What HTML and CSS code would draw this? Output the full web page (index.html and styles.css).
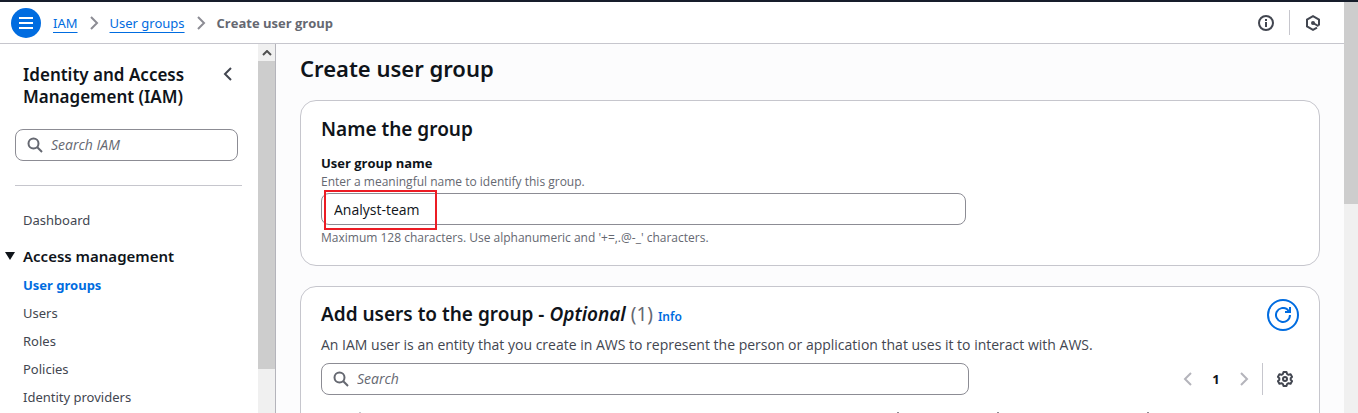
FILE: index.html
```html
<!DOCTYPE html>
<html lang="en">
<head>
<meta charset="utf-8">
<meta name="viewport" content="width=device-width, initial-scale=1">
<title>Create user group | IAM</title>
<link rel="stylesheet" href="styles.css">
</head>
<body>
<div class="app">
  <div class="page">
    <header class="topbar">
      <button class="menu-btn" aria-label="Toggle navigation">
        <svg width="16" height="16" viewBox="0 0 16 16"><path d="M1 3h14M1 8h14M1 13h14" /></svg>
      </button>
      <nav class="crumbs" aria-label="Breadcrumbs">
        <a href="#">IAM</a>
        <svg class="sep" width="16" height="16" viewBox="0 0 16 16"><path d="M5 2l6 6-6 6" /></svg>
        <a href="#">User groups</a>
        <svg class="sep" width="16" height="16" viewBox="0 0 16 16"><path d="M5 2l6 6-6 6" /></svg>
        <span class="current">Create user group</span>
      </nav>
      <div class="tools">
        <button class="icon-btn" aria-label="Info">
          <svg width="16" height="16" viewBox="0 0 16 16"><circle cx="8" cy="8" r="7" /><path d="M8 4v2M8 7v5" /></svg>
        </button>
        <span class="rule"></span>
        <button class="icon-btn" aria-label="Resources">
          <svg width="16" height="16" viewBox="0 0 16 16"><path d="M14 10.500V4.500L8 1.200 2 4.500v7L8 14.800l4-2.200" /><path d="M8 8l5.500 3.200" /><circle cx="8" cy="8" r="1" /></svg>
        </button>
      </div>
    </header>
    <div class="body">
      <aside class="sidebar">
        <div class="side-content">
          <div class="side-head">
            <h2>Identity and Access Management (IAM)</h2>
            <button class="icon-btn" aria-label="Close navigation">
              <svg width="16" height="16" viewBox="0 0 16 16"><path d="M11 2L5 8l6 6" /></svg>
            </button>
          </div>
          <label class="search side-search">
            <svg width="16" height="16" viewBox="0 0 16 16"><circle cx="6.500" cy="6.500" r="5" /><path d="M10.300 10.300L15 15" /></svg>
            <input type="search" placeholder="Search IAM" aria-label="Search IAM">
          </label>
          <hr>
          <nav class="side-nav">
            <a href="#">Dashboard</a>
            <button class="section"><svg width="10" height="8" viewBox="0 0 10 8"><path d="M0 0h10L5 8z" /></svg>Access management</button>
            <a href="#" class="active">User groups</a>
            <a href="#">Users</a>
            <a href="#">Roles</a>
            <a href="#">Policies</a>
            <a href="#">Identity providers</a>
          </nav>
        </div>
        <div class="side-scroll">
          <div class="arrow"><svg width="10" height="6" viewBox="0 0 10 6"><path d="M1 5l4-4 4 4" /></svg></div>
          <div class="thumb"></div>
        </div>
      </aside>
      <main class="main">
        <h1>Create user group</h1>
        <section class="card">
          <h2>Name the group</h2>
          <div class="field">
            <label for="group-name">User group name</label>
            <p class="hint">Enter a meaningful name to identify this group.</p>
            <div class="name-wrap">
              <input id="group-name" class="name-input" type="text" value="Analyst-team">
              <span class="highlight"></span>
            </div>
            <p class="hint below">Maximum 128 characters. Use alphanumeric and '+=,.@-_' characters.</p>
          </div>
        </section>
        <section class="card users">
          <div class="users-head">
            <h2>Add users to the group - <em>Optional</em> <span class="count">(1)</span> <a href="#" class="info">Info</a></h2>
            <button class="refresh" aria-label="Refresh">
              <svg width="16" height="16" viewBox="0 0 16 16"><path d="M15 8a7 7 0 1 1-2.500-5.400L14.500 5M15 0v5h-5" /></svg>
            </button>
          </div>
          <p class="desc">An IAM user is an entity that you create in AWS to represent the person or application that uses it to interact with AWS.</p>
          <div class="toolbar">
            <label class="search">
              <svg width="16" height="16" viewBox="0 0 16 16"><circle cx="6.500" cy="6.500" r="5" /><path d="M10.300 10.300L15 15" /></svg>
              <input type="search" placeholder="Search" aria-label="Search users">
            </label>
            <div class="pager">
              <button class="icon-btn muted" aria-label="Previous page"><svg width="16" height="16" viewBox="0 0 16 16"><path d="M11 2L5 8l6 6" /></svg></button>
              <button class="num">1</button>
              <button class="icon-btn muted" aria-label="Next page"><svg width="16" height="16" viewBox="0 0 16 16"><path d="M5 2l6 6-6 6" /></svg></button>
              <span class="rule tall"></span>
              <button class="icon-btn" aria-label="Preferences">
                <svg width="16" height="16" viewBox="0 0 16 16" stroke-linejoin="round"><path d="M6.500 1h3l.6 2 1.400.8 2.100-.5 1.500 2.600L13.700 7.300v1.400l1.400 1.400-1.500 2.600-2.100-.5-1.400.8-.6 2h-3l-.6-2-1.400-.8-2.100.5L.9 10.100l1.400-1.400V7.300L.9 5.900l1.500-2.600 2.100.5L5.900 3z" /><circle cx="8" cy="8" r="2" /></svg>
              </button>
            </div>
          </div>
          <table class="grid">
            <colgroup><col class="c-select"><col><col class="c-small"><col class="c-medium"><col class="c-wide"></colgroup>
            <thead><tr><th></th><th></th><th></th><th></th><th></th></tr></thead>
          </table>
        </section>
      </main>
    </div>
  </div>
  <div class="page-scroll"><div class="page-thumb"></div></div>
</div>
</body>
</html>
```
FILE: styles.css
```css
* { box-sizing: border-box; }
body {
  margin: 0;
  font: 14px/20px "Open Sans", "Noto Sans", sans-serif;
  color: #0f141a;
  overflow: hidden;
}
h1, h2, p { margin: 0; }
h1, h2, .crumbs a, .side-nav { font-family: "Noto Sans", "Open Sans", sans-serif; }
button { padding: 0; border: 0; background: none; font: inherit; color: inherit; cursor: pointer; }
svg { display: block; flex: none; fill: none; stroke: currentColor; stroke-width: 2; }
a { color: #006ce0; }
.app { display: flex; height: 100vh; border-top: 2px solid #161d2b; }
.page { flex: 1; min-width: 0; display: flex; flex-direction: column; }
.topbar { flex: none; display: flex; align-items: center; height: 42px; padding: 0 23px 0 11px; border-bottom: 1px solid #c6c6cd; background: #fff; }
.menu-btn { display: grid; place-items: center; width: 30px; height: 30px; border-radius: 50%; background: #006ce0; color: #fff; }
.crumbs { display: flex; align-items: center; gap: 8px; margin-left: 12px; font-size: 13px; }
.crumbs a { text-underline-offset: 4px; }
.crumbs .sep { color: #8c8c94; }
.crumbs .current { font-weight: 700; color: #656871; }
.tools { display: flex; align-items: center; gap: 15px; margin-left: auto; }
.icon-btn { color: #424650; }
.rule { width: 1px; height: 25px; background: #c6c6cd; }
.body { flex: 1; min-height: 0; display: flex; }
.sidebar { flex: none; display: flex; width: 276px; border-right: 1px solid #b4b4bb; background: #fff; }
.side-content { flex: 1; min-width: 0; padding: 20px 16px 0 15px; overflow: hidden; }
.side-head { display: flex; justify-content: space-between; align-items: flex-start; padding: 0 6px 0 8px; }
.side-head h2 { width: 180px; font-size: 17px; line-height: 22px; font-weight: 600; }
.side-head .icon-btn { padding-top: 2px; }
.search { display: flex; align-items: center; gap: 8px; height: 32px; padding: 0 11px; border: 1px solid #8c8c94; border-radius: 8px; background: #fff; color: #656871; }
.search input { flex: 1; min-width: 0; padding: 0; border: 0; outline: 0; background: none; font: inherit; color: #0f141a; }
.search input::placeholder { color: #656871; font-style: italic; opacity: 1; }
.side-search { margin: 21px 4px 0 0; }
hr { height: 1px; margin: 24px 0; border: 0; background: #c6c6cd; }
.side-nav { display: flex; flex-direction: column; gap: 8px; padding-left: 8px; font-size: 13px; }
.side-nav a { color: #424650; text-decoration: none; }
.side-nav .active { color: #006ce0; font-weight: 700; }
.section { display: flex; align-items: center; gap: 8px; margin: 8px 0 1px -18px; font-size: 15px; font-weight: 600; }
.section svg { fill: currentColor; stroke: none; }
.side-scroll { width: 17px; background: #f0f0f0; }
.arrow { display: grid; place-items: center; height: 17px; color: #505050; }
.thumb { height: 308px; background: #cdcdcd; }
.main { flex: 1; min-width: 0; padding: 9px 24px 0; background: #fcfcfd; overflow: hidden; }
h1 { font-size: 22px; line-height: 30px; font-weight: 600; }
.card { margin-top: 17px; padding: 16px 20px 18px; border: 1px solid #c6c6cd; border-radius: 16px; background: #fff; }
.card h2 { font-size: 19px; line-height: 24px; font-weight: 600; }
.field { margin-top: 12px; }
.field label { display: block; font-size: 13px; font-weight: 700; }
.hint { font-size: 12px; line-height: 18px; color: #656871; }
.below { margin-top: 4px; }
.name-wrap { position: relative; width: 66%; margin-top: 2px; }
.name-input { display: block; width: 100%; height: 32px; padding: 0 12px; border: 1px solid #8c8c94; border-radius: 8px; font: inherit; color: #0f141a; outline: 0; }
.highlight { position: absolute; left: 3px; top: -3px; width: 113px; height: 40px; border: 2px solid #ec1c24; }
.users { margin-top: 20px; padding-top: 12px; height: 200px; }
.users-head { display: flex; justify-content: space-between; align-items: center; }
.card .count { font-weight: 400; color: #656871; }
.info { font-size: 12px; text-decoration: none; }
.refresh { display: grid; place-items: center; width: 32px; height: 32px; border: 2px solid #006ce0; border-radius: 50%; color: #006ce0; }
.desc { margin-top: 4px; color: #424650; }
.toolbar { display: flex; justify-content: space-between; align-items: center; margin-top: 8px; }
.toolbar .search { flex: 1; max-width: 648px; }
.pager { display: flex; align-items: center; padding-right: 6px; }
.num { width: 40px; font-size: 13px; font-weight: 700; }
.muted { color: #b4b4bb; }
.tall { height: 32px; margin: 0 14px 0 10px; }
.grid { width: 100%; margin-top: 17px; border-collapse: separate; border-spacing: 0; table-layout: fixed; }
.grid th { height: 24px; padding: 0; border-right: 2px solid #8c8c94; }
.grid th:first-child { border-color: #c6c6cd; }
.grid th:last-child { border: 0; }
.c-select { width: 40px; }
.c-small { width: 100px; }
.c-medium { width: 150px; }
.c-wide { width: 150px; }
.page-scroll { flex: none; width: 14px; background: #f0f0f0; }
.page-thumb { height: 202px; background: #cdcdcd; }
```
